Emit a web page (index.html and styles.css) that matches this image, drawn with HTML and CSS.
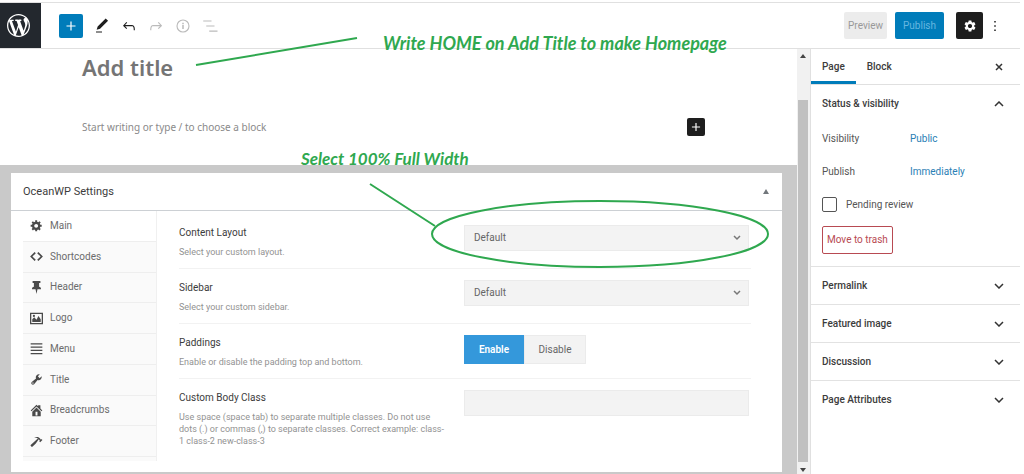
FILE: index.html
```html
<!DOCTYPE html>
<html lang="en">
<head>
    <meta charset="UTF-8">
    <meta name="viewport" content="width=device-width, initial-scale=1.0">
    <title>Add New Page</title>
    <link rel="stylesheet" href="styles.css">
</head>
<body>
    <header class="topbar">
        <a class="wp-logo" href="#" aria-label="View Pages">
            <svg viewBox="0 0 20 20"><path d="M20 10c0-5.51-4.49-10-10-10C4.48 0 0 4.49 0 10c0 5.52 4.48 10 10 10 5.51 0 10-4.48 10-10zM7.78 15.37L4.37 6.22c.55-.02 1.17-.08 1.17-.08.5-.06.44-1.13-.06-1.11 0 0-1.45.11-2.37.11-.18 0-.37 0-.58-.01C4.12 2.69 6.87 1.11 10 1.11c2.33 0 4.45.87 6.05 2.34-.68-.11-1.65.39-1.65 1.58 0 .74.45 1.36.9 2.1.35.61.55 1.36.55 2.46 0 1.49-1.4 5-1.4 5l-3.03-8.37c.54-.02.82-.17.82-.17.5-.05.44-1.25-.06-1.22 0 0-1.44.12-2.38.12-.87 0-2.33-.12-2.33-.12-.5-.03-.56 1.2-.06 1.22l.92.08 1.26 3.41zM17.41 10c.24-.64.74-1.87.43-4.25.7 1.29 1.05 2.71 1.05 4.25 0 3.29-1.73 6.24-4.4 7.78.97-2.59 1.94-5.2 2.92-7.78zM6.1 18.09C3.12 16.65 1.11 13.53 1.11 10c0-1.3.23-2.48.72-3.59C3.25 10.3 4.67 14.2 6.1 18.09zm4.03-6.63l2.58 6.98c-.86.29-1.76.45-2.71.45-.79 0-1.57-.11-2.29-.33.81-2.38 1.62-4.74 2.42-7.1z"/></svg>
        </a>
        <div class="tools">
            <button class="tool tool-add" aria-label="Add block"><svg viewBox="0 0 24 24"><path d="M18 11.2h-5.2V6h-1.6v5.2H6v1.6h5.2V18h1.6v-5.2H18z"/></svg></button>
            <button class="tool" aria-label="Tools"><svg viewBox="0 0 24 24"><path d="M20.1 5.1L16.9 2 6.2 12.7l-1.3 4.4 4.5-1.3L20.1 5.1zM4 20.8h8v-1.5H4v1.5z"/></svg></button>
            <button class="tool" aria-label="Undo"><svg viewBox="0 0 24 24"><path d="M18.3 11.7c-.6-.6-1.4-.9-2.3-.9H6.7l2.9-3.3-1.1-1-4.5 5L8.5 16l1-1-2.7-2.7H16c.5 0 .9.2 1.3.5 1 1 1 3.4 1 4.5v.3h1.5v-.2c0-1.5 0-4.3-1.5-5.7z"/></svg></button>
            <button class="tool" aria-label="Redo" disabled><svg viewBox="0 0 24 24"><path d="M15.6 6.5l-1.1 1 2.9 3.3H8c-.9 0-1.7.3-2.3.9-1.4 1.5-1.4 4.2-1.4 5.6v.2h1.5v-.3c0-1.1 0-3.5 1-4.5.3-.3.7-.5 1.3-.5h9.2L14.5 15l1.1 1.1 4.6-4.6-4.6-5z"/></svg></button>
            <button class="tool" aria-label="Details" disabled><svg viewBox="0 0 24 24"><circle cx="12" cy="12" r="8" fill="none" stroke="currentColor" stroke-width="1.5"/><path d="M11 10.500h2V16h-2zM11 7.500h2v2h-2z"/></svg></button>
            <button class="tool" aria-label="Outline" disabled><svg viewBox="0 0 24 24"><path d="M3 4.500h11V6H3zM7 11.200h11v1.500H7zM11 18h11v1.500H11z"/></svg></button>
        </div>
        <div class="actions">
            <button class="btn btn-preview">Preview</button>
            <button class="btn btn-publish">Publish</button>
            <button class="btn-settings" aria-label="Settings"><svg viewBox="0 0 24 24"><path d="M19.14 12.94c.04-.3.06-.61.06-.94 0-.32-.02-.64-.07-.94l2.03-1.58c.18-.14.23-.41.12-.61l-1.92-3.32c-.12-.22-.37-.29-.59-.22l-2.39.96c-.5-.38-1.03-.7-1.62-.94l-.36-2.54c-.04-.24-.24-.41-.48-.41h-3.84c-.24 0-.43.17-.47.41l-.36 2.54c-.59.24-1.13.57-1.62.94l-2.39-.96c-.22-.08-.47 0-.59.22L2.74 8.87c-.12.21-.08.47.12.61l2.03 1.58c-.05.3-.09.63-.09.94s.02.64.07.94l-2.03 1.58c-.18.14-.23.41-.12.61l1.92 3.32c.12.22.37.29.59.22l2.39-.96c.5.38 1.03.7 1.62.94l.36 2.54c.05.24.24.41.48.41h3.84c.24 0 .44-.17.47-.41l.36-2.54c.59-.24 1.13-.56 1.62-.94l2.39.96c.22.08.47 0 .59-.22l1.92-3.32c.12-.22.07-.47-.12-.61l-2.01-1.58zM12 15.6c-1.98 0-3.6-1.62-3.6-3.6s1.62-3.6 3.6-3.6 3.6 1.62 3.6 3.6-1.62 3.6-3.6 3.6z"/></svg></button>
            <button class="btn-more" aria-label="Options"><svg viewBox="0 0 24 24"><path d="M10.500 2h3v3h-3zM10.500 10.500h3v3h-3zM10.500 19h3v3h-3z"/></svg></button>
        </div>
    </header>

    <div class="editor">
        <main class="content">
            <section class="canvas">
                <h1 class="page-title">Add title</h1>
                <div class="starter">
                    <p>Start writing or type / to choose a block</p>
                    <button class="inserter" aria-label="Add block"><svg viewBox="0 0 24 24"><path d="M19 11H13V5h-2v6H5v2h6v6h2v-6h6z"/></svg></button>
                </div>
            </section>

            <section class="metabox-area">
                <div class="metabox">
                    <div class="metabox-header">
                        <h2>OceanWP Settings</h2>
                        <button class="toggle" aria-label="Toggle panel"><svg viewBox="0 0 6 5"><path d="M3 0l3 5H0z"/></svg></button>
                    </div>
                    <div class="metabox-body">
                        <nav class="tabs">
                            <a class="active" href="#"><svg viewBox="0 0 20 20"><path d="M18 12h-2.18c-.17.7-.44 1.35-.81 1.93l1.54 1.54-2.1 2.1-1.54-1.54c-.58.36-1.23.63-1.91.79V19H8v-2.18c-.68-.16-1.33-.43-1.91-.79l-1.54 1.54-2.12-2.12 1.54-1.54c-.36-.58-.63-1.23-.79-1.91H1V9.03h2.17c.16-.7.44-1.35.8-1.94L2.43 5.55l2.1-2.1 1.54 1.54c.58-.37 1.24-.64 1.93-.81V2h3v2.18c.68.16 1.33.43 1.91.79l1.54-1.54 2.12 2.12-1.54 1.54c.36.59.64 1.24.8 1.94H18V12zm-8.5 1.5c1.66 0 3-1.34 3-3s-1.34-3-3-3-3 1.34-3 3 1.34 3 3 3z"/></svg>Main</a>
                            <a href="#"><svg viewBox="0 0 20 20"><path d="M8 4L2 10l6 6M12 4l6 6-6 6" fill="none" stroke="currentColor" stroke-width="2.6"/></svg>Shortcodes</a>
                            <a href="#"><svg viewBox="0 0 20 20"><path d="M4 0h12v3h-2v6c2 .5 3 1.700 3 3.500h-5.500L10 20l-1.500-7.500H3c0-1.800 1-3 3-3.500V3H4z"/></svg>Header</a>
                            <a href="#"><svg viewBox="0 0 20 20"><path fill-rule="evenodd" d="M0 1h20v18H0zM2 3v14h16V3z"/><path d="M3.500 15.500V11l3-3 3.500 4 3-6 3.500 5v4.500z"/><circle cx="6" cy="6" r="1.700"/></svg>Logo</a>
                            <a href="#"><svg viewBox="0 0 20 20"><path d="M1 2h18v2H1zM1 7h18v2H1zM1 12h18v2H1zM1 17h18v2H1z"/></svg>Menu</a>
                            <a href="#"><svg viewBox="0 0 20 20"><path d="M16.680 9.770c-1.340 1.340-3.300 1.670-4.950.99l-5.410 6.520c-.99.99-2.590.99-3.580 0s-.99-2.590 0-3.570l6.520-5.420c-.68-1.650-.35-3.610.99-4.950 1.280-1.280 3.120-1.620 4.720-1.060l-2.890 2.890 2.820 2.820 2.860-2.870c.53 1.580.18 3.390-1.080 4.650zM3.810 16.210c.4.39 1.040.39 1.430 0 .4-.4.4-1.040 0-1.430-.39-.4-1.030-.4-1.430 0-.39.39-.39 1.030 0 1.430z"/></svg>Title</a>
                            <a href="#"><svg viewBox="0 0 20 20"><path d="M10 1l2.500 2.500V2H16v5l3 3-1.300 1.300L10 3.700l-7.700 7.600L1 10z"/><path fill-rule="evenodd" d="M10 5.500l6.500 6.300V19h-13v-7.200zM8.500 12v5.500h3V12z"/></svg>Breadcrumbs</a>
                            <a href="#"><svg viewBox="0 0 20 20"><path d="M17.700 6.320l1.410 1.420-3.470 3.410-1.420-1.420.84-.82c-.32-.76-.81-1.570-1.510-2.310l-4.610 6.590-5.260 4.700c-.39.39-1.020.39-1.420 0l-1.200-1.210c-.39-.39-.39-1.020 0-1.410l10.970-9.920c-1.370-.86-3.210-1.460-5.670-1.480 2.700-.82 4.950-.93 6.580-.3 1.700.66 2.820 2.200 3.910 3.580z"/></svg>Footer</a>
                        </nav>
                        <div class="settings">
                            <div class="setting">
                                <div class="setting-text">
                                    <label for="content-layout">Content Layout</label>
                                    <p>Select your custom layout.</p>
                                </div>
                                <div class="select-wrap">
                                    <select id="content-layout">
                                        <option>Default</option>
                                        <option>100% Full Width</option>
                                    </select>
                                    <svg viewBox="0 0 8 6"><path d="M1 1l3 3 3-3"/></svg>
                                </div>
                            </div>
                            <div class="setting">
                                <div class="setting-text">
                                    <label for="sidebar">Sidebar</label>
                                    <p>Select your custom sidebar.</p>
                                </div>
                                <div class="select-wrap">
                                    <select id="sidebar">
                                        <option>Default</option>
                                    </select>
                                    <svg viewBox="0 0 8 6"><path d="M1 1l3 3 3-3"/></svg>
                                </div>
                            </div>
                            <div class="setting">
                                <div class="setting-text">
                                    <h3>Paddings</h3>
                                    <p>Enable or disable the padding top and bottom.</p>
                                </div>
                                <div class="switch">
                                    <button class="on">Enable</button>
                                    <button>Disable</button>
                                </div>
                            </div>
                            <div class="setting">
                                <div class="setting-text">
                                    <label for="body-class">Custom Body Class</label>
                                    <p>Use space (space tab) to separate multiple classes. Do not use dots (.) or commas (,) to separate classes. Correct example: class-<wbr>1 class-2 new-class-3</p>
                                </div>
                                <input type="text" id="body-class">
                            </div>
                        </div>
                    </div>
                </div>
            </section>
        </main>

        <div class="scrollbar">
            <svg viewBox="0 0 6 4"><path d="M3 0l3 4H0z"/></svg>
            <div class="thumb"></div>
            <svg viewBox="0 0 6 4"><path d="M3 4l3-4H0z"/></svg>
        </div>

        <aside class="sidebar">
            <div class="sidebar-tabs">
                <button class="active">Page</button>
                <button>Block</button>
                <button class="close" aria-label="Close settings"><svg viewBox="0 0 8 8"><path d="M1 1l6 6M7 1L1 7"/></svg></button>
            </div>
            <section class="panel">
                <button class="panel-title">Status &amp; visibility<svg viewBox="0 0 10 6"><path d="M1 5l4-4 4 4"/></svg></button>
                <div class="panel-row"><span>Visibility</span><a href="#">Public</a></div>
                <div class="panel-row"><span>Publish</span><a href="#">Immediately</a></div>
                <div class="check-row">
                    <input type="checkbox" id="pending">
                    <label for="pending">Pending review</label>
                </div>
                <button class="trash">Move to trash</button>
            </section>
            <section class="panel"><button class="panel-title">Permalink<svg viewBox="0 0 10 6"><path d="M1 1l4 4 4-4"/></svg></button></section>
            <section class="panel"><button class="panel-title">Featured image<svg viewBox="0 0 10 6"><path d="M1 1l4 4 4-4"/></svg></button></section>
            <section class="panel"><button class="panel-title">Discussion<svg viewBox="0 0 10 6"><path d="M1 1l4 4 4-4"/></svg></button></section>
            <section class="panel"><button class="panel-title">Page Attributes<svg viewBox="0 0 10 6"><path d="M1 1l4 4 4-4"/></svg></button></section>
        </aside>
    </div>

    <!-- Tutorial notes drawn over the editor -->
    <svg class="marks" width="800" height="300" viewBox="0 0 800 300">
        <path d="M196 65L357 38M370 184L435 226"/>
        <ellipse cx="600" cy="234" rx="168" ry="33"/>
    </svg>
    <p class="note note-title">Write HOME on Add Title to make Homepage</p>
    <p class="note note-width">Select 100% Full Width</p>
</body>
</html>
```

FILE: styles.css
```css
* {
    box-sizing: border-box;
}
body {
    position: relative;
    display: flex;
    flex-direction: column;
    min-height: 100vh;
    margin: 0;
    padding: 2px 4px 0 0;
    background-color: #fff;
    color: #3c3c3c;
    font-family: Roboto, "Noto Sans", sans-serif;
    font-size: 10px;
    line-height: 16px;
}
h1, h2, h3, p {
    margin: 0;
}
button, input, select {
    font: inherit;
    color: inherit;
}
button {
    padding: 0;
    border: none;
    background: none;
    cursor: pointer;
}
a {
    color: #2a80b5;
    text-decoration: none;
}
svg {
    display: block;
    fill: currentColor;
}

/* Top bar */
.topbar {
    display: flex;
    align-items: center;
    height: 47px;
    border-top: 1px solid #e0e0e0;
    border-bottom: 1px solid #e0e0e0;
}
.wp-logo {
    display: flex;
    align-items: center;
    align-self: stretch;
    width: 41px;
    padding-left: 7px;
    background-color: #23282e;
    color: #fff;
}
.wp-logo svg {
    width: 23px;
    height: 23px;
}
.tools {
    display: flex;
    gap: 3px;
    margin-left: 18px;
}
.tool, .inserter, .btn-settings, .btn-more {
    display: flex;
    align-items: center;
    justify-content: center;
    width: 24px;
    height: 24px;
    color: #1e1e1e;
}
.tool svg {
    width: 18px;
    height: 18px;
}
.tool:disabled {
    color: #bbb;
}
.tool-add {
    margin-right: 4px;
    border-radius: 2px;
    background-color: #007cba;
    color: #fff;
}
.actions {
    display: flex;
    align-items: center;
    margin-left: auto;
    padding-right: 13px;
}
.btn {
    height: 27px;
    border-radius: 2px;
}
.btn-preview {
    width: 43px;
    margin-right: 8px;
    background-color: #ececec;
    color: #999;
}
.btn-publish {
    width: 49px;
    margin-right: 12px;
    background-color: #007cba;
    color: #66b7e0;
}
.btn-settings {
    width: 27px;
    height: 27px;
    border-radius: 2px;
    background-color: #1e1e1e;
    color: #fff;
}
.btn-settings svg {
    width: 14px;
    height: 14px;
}
.btn-more svg {
    width: 12px;
    height: 12px;
}

/* Editor */
.editor {
    display: grid;
    grid-template-columns: 1fr 13px 210px;
    flex: 1;
}
.content {
    display: flex;
    flex-direction: column;
    min-width: 0;
}
.canvas {
    height: 116px;
    padding: 2px 92px 0 82px;
    font-family: "Noto Sans", sans-serif;
}
.page-title {
    color: #757575;
    font-size: 22px;
    font-weight: 600;
    line-height: 32px;
}
.starter {
    display: flex;
    align-items: center;
    justify-content: space-between;
    margin-top: 35px;
    color: #8a8a8a;
}
.inserter {
    width: 18px;
    height: 18px;
    border-radius: 2px;
    background-color: #1e1e1e;
    color: #fff;
}
.inserter svg {
    width: 14px;
    height: 14px;
}
.metabox-area {
    display: flex;
    flex: 1;
    padding: 8px 15px 2px 11px;
    background-color: #c9c9c9;
}
.metabox {
    display: flex;
    flex-direction: column;
    flex: 1;
    background-color: #fff;
}
.metabox-header {
    display: flex;
    align-items: center;
    justify-content: space-between;
    height: 38px;
    padding: 0 13px 0 12px;
    border-bottom: 1px solid #ccd0d4;
}
.metabox-header h2 {
    font-size: 11px;
    font-weight: 400;
}
.toggle {
    color: #72777c;
}
.toggle svg {
    width: 6px;
    height: 5px;
}
.metabox-body {
    display: grid;
    grid-template-columns: 134px 1fr;
    flex: 1;
    gap: 22px;
    padding: 0 31px 11px 12px;
}

.tabs {
    display: grid;
    grid-auto-rows: 1fr;
    padding-bottom: 4px;
    border-right: 1px solid #f0f0f0;
    background-color: #fafafa;
}
.tabs a {
    display: flex;
    align-items: center;
    gap: 7px;
    padding-left: 7px;
    border-bottom: 1px solid #eee;
    color: #6c6c6c;
}
.tabs a.active {
    background-color: #fff;
}
.tabs svg {
    width: 13px;
    height: 13px;
    color: #4a4a4a;
}

.settings {
    padding: 3px 0 14px;
}
.setting {
    display: grid;
    grid-template-columns: 1fr 1fr;
    align-items: start;
    padding: 10px 2px 10px 0;
    border-bottom: 1px solid #f2f2f2;
}
.setting:last-child {
    padding-bottom: 0;
    border-bottom: none;
}
.setting-text {
    padding-right: 18px;
}
.setting label, .setting h3 {
    display: block;
    font-size: 10px;
    font-weight: 400;
    line-height: 18px;
}
.setting-text p {
    margin-top: 4px;
    color: #929292;
    font-size: 9px;
    line-height: 12px;
}
.select-wrap, .switch, .setting input {
    margin-top: 1px;
}
/* keeps the control from making the row taller */
.select-wrap, .switch {
    margin-bottom: -6px;
}
.select-wrap {
    position: relative;
}
.select-wrap select, .setting input {
    width: 100%;
    height: 26px;
    padding: 0 9px;
    border: 1px solid #ebebeb;
    border-radius: 0;
    background-color: #f3f3f3;
    color: #666;
    appearance: none;
}
.select-wrap svg {
    position: absolute;
    top: 10px;
    right: 8px;
    width: 8px;
    height: 6px;
    fill: none;
    stroke: #777;
    stroke-width: 1.5;
    pointer-events: none;
}
.switch {
    display: flex;
}
.switch button {
    width: 62px;
    height: 29px;
    border: 1px solid #ebebeb;
    background-color: #f3f3f3;
    color: #666;
}
.switch .on {
    width: 60px;
    border-color: #3498db;
    background-color: #3498db;
    color: #fff;
    font-weight: 600;
}

/* Page scrollbar */
.scrollbar {
    display: flex;
    flex-direction: column;
    align-items: center;
    padding: 5px 2px 2px 1px;
    background-color: #f1f1f1;
    color: #444;
}
.scrollbar svg {
    width: 6px;
    height: 4px;
}
.scrollbar .thumb {
    flex: 1;
    align-self: stretch;
    margin: 42px 0 6px;
    background-color: #c0c0c0;
}

/* Settings sidebar */
.sidebar {
    border-left: 1px solid #e0e0e0;
}
.sidebar-tabs {
    display: flex;
    height: 36px;
    padding-right: 17px;
    border-bottom: 1px solid #e0e0e0;
}
.sidebar-tabs button {
    padding: 3px 11px 0;
    border-bottom: 3px solid transparent;
    font-weight: 500;
}
.sidebar-tabs .active {
    border-bottom-color: #007cba;
}
.sidebar-tabs .close {
    margin-left: auto;
    padding: 3px 0 0;
}
.close svg {
    width: 8px;
    height: 8px;
    stroke: #333;
    stroke-width: 1.5;
}
.panel {
    padding: 0 16px 0 11px;
    border-bottom: 1px solid #e2e2e2;
}
.panel:last-child {
    border-bottom: none;
}
.panel-title {
    display: flex;
    align-items: center;
    justify-content: space-between;
    width: 100%;
    height: 37px;
    font-weight: 500;
}
.panel-title svg {
    width: 10px;
    height: 6px;
    fill: none;
    stroke: #333;
    stroke-width: 1.5;
}
.panel-row {
    display: grid;
    grid-template-columns: 88px 1fr;
    align-items: center;
    height: 33px;
    color: #555;
}
.check-row {
    display: flex;
    align-items: center;
    gap: 9px;
    height: 33px;
    color: #555;
}
.check-row input {
    width: 15px;
    height: 15px;
    margin: 0;
    border: 1px solid #555;
    border-radius: 2px;
    appearance: none;
}
.trash {
    height: 28px;
    margin: 5px 0 12px;
    padding: 0 4px;
    border: 1px solid #b84a52;
    border-radius: 2px;
    color: #b84a52;
}

/* Notes */
.marks {
    position: absolute;
    top: 0;
    left: 0;
    fill: none;
    stroke: #2fa84f;
    stroke-width: 2;
    pointer-events: none;
}
.note {
    position: absolute;
    color: #2fa84f;
    font-family: Lato, sans-serif;
    font-size: 17px;
    font-style: italic;
    font-weight: 700;
    line-height: 22px;
    white-space: nowrap;
}
.note-title {
    top: 32px;
    left: 383px;
    font-size: 18px;
}
.note-width {
    top: 148px;
    left: 301px;
}
```
